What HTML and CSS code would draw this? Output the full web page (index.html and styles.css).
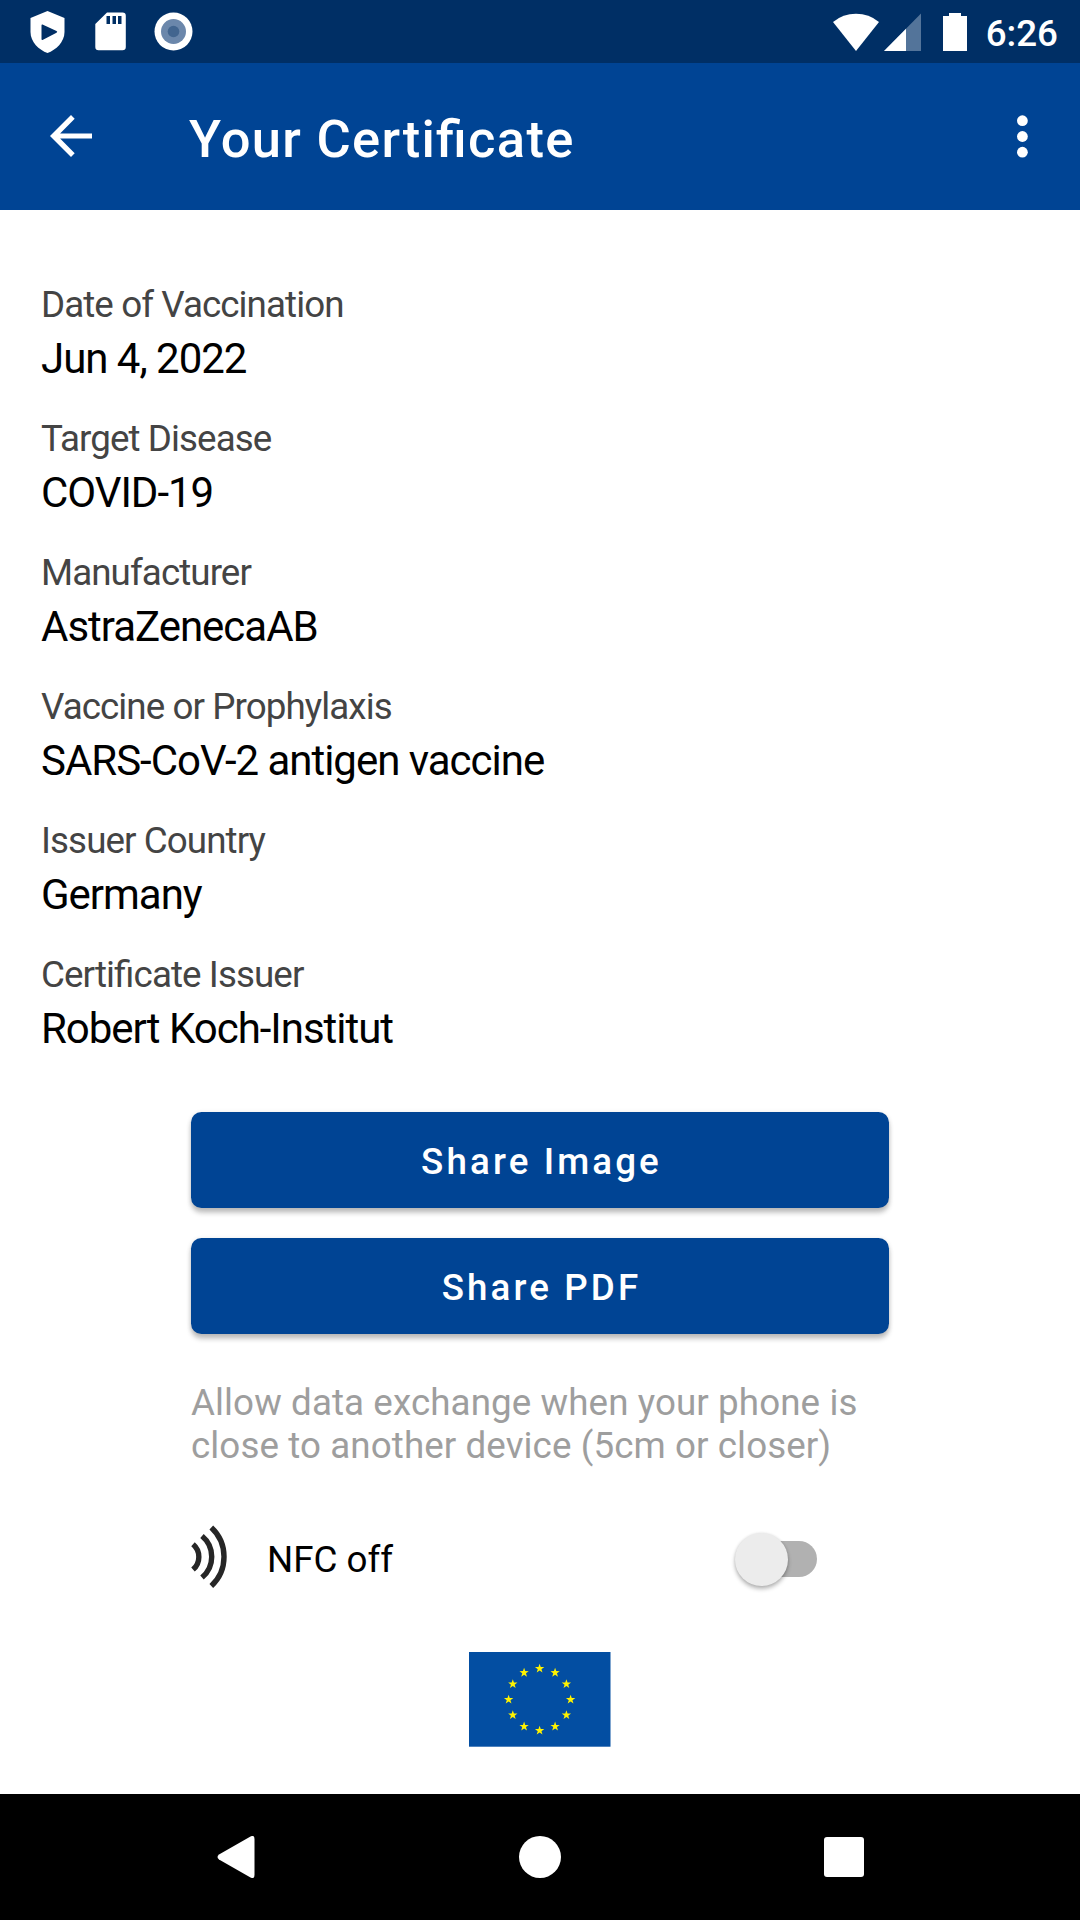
FILE: index.html
```html
<!DOCTYPE html>
<html lang="en">
<head>
<meta charset="utf-8">
<title>Your Certificate</title>
<link rel="stylesheet" href="styles.css">
</head>
<body>
<div class="status-bar">
  <div class="status-left">
    <svg width="36" height="42" viewBox="0 0 36 42"><path fill="#fff" fill-rule="evenodd" d="M17.500 0L34.500 7V21C34.500 31 26 39 17.500 42C9 39 0.500 31 0.500 21V7ZM12.500 13.500Q11.500 13 11.500 14.500V28Q11.500 29.500 13 28.700L26.500 21.800Q28 20.800 26.500 20Z"/></svg>
    <svg width="31" height="39" viewBox="0 0 31 39"><path fill="#fff" fill-rule="evenodd" d="M12 0.500H27.500Q30.800 0.500 30.800 3.800V35Q30.800 38.300 27.500 38.300H3.600Q0.300 38.300 0.300 35V12ZM11.500 4V12H15V4ZM17.500 4V12H21V4ZM23 4V12H26.500V4Z"/></svg>
    <svg class="record" width="39" height="39" viewBox="0 0 39 39"><circle cx="19.500" cy="19.500" r="19" fill="#fff"/><circle cx="19.500" cy="19.500" r="12.500" fill="#6b87ab"/><circle cx="19.500" cy="19.500" r="5.800" fill="#42658f"/></svg>
  </div>
  <div class="status-right">
    <svg width="46" height="38" viewBox="0 0 46 38"><path fill="#fff" d="M0 9Q10 0.800 23 0.800T46 9L23 38Z"/></svg>
    <svg class="signal" width="37" height="38" viewBox="0 0 37 38"><path fill="#53749a" d="M37 0.500V38H0Z"/><path fill="#fff" d="M22 15.700V38H0Z"/></svg>
    <svg class="battery" width="24" height="38" viewBox="0 0 24 38"><path fill="#fff" d="M6 0H18V3H24V38H0V3H6Z"/></svg>
    <span class="time">6:26</span>
  </div>
</div>
<header class="app-bar">
  <svg class="back" width="42" height="42" viewBox="0 0 42 42"><path fill="#fff" d="M42 18.400H10.100L24.700 3.700L21 0L0 21L21 42L24.700 38.300L10.100 23.600H42Z"/></svg>
  <h1 class="title">Your Certificate</h1>
  <svg class="more" width="12" height="43" viewBox="0 0 12 43"><g fill="#fff"><circle cx="6.400" cy="5.700" r="5.400"/><circle cx="6.400" cy="21.500" r="5.400"/><circle cx="6.400" cy="37.200" r="5.400"/></g></svg>
</header>
<main class="content">
  <dl class="fields">
    <div><dt>Date of Vaccination</dt><dd>Jun 4, 2022</dd></div>
    <div><dt>Target Disease</dt><dd>COVID-19</dd></div>
    <div><dt>Manufacturer</dt><dd>AstraZenecaAB</dd></div>
    <div><dt>Vaccine or Prophylaxis</dt><dd>SARS-CoV-2 antigen vaccine</dd></div>
    <div><dt>Issuer Country</dt><dd>Germany</dd></div>
    <div><dt>Certificate Issuer</dt><dd>Robert Koch-Institut</dd></div>
  </dl>
  <div class="actions">
    <button class="share">Share Image</button>
    <button class="share">Share PDF</button>
    <p class="hint">Allow data exchange when your phone is<br>close to another device (5cm or closer)</p>
    <div class="nfc">
      <svg width="36" height="68" viewBox="0 0 36 68"><g fill="none" stroke="#262626" stroke-width="5.400"><path d="M2 21.300A16.500 16.500 0 0 1 2 46.500"/><path d="M11 13A27 27 0 0 1 11 54.500"/><path d="M20.300 4.500A40 40 0 0 1 20.300 63"/></g></svg>
      <span class="nfc-label">NFC off</span>
      <span class="switch"><span class="thumb"></span></span>
    </div>
  </div>
  <svg class="flag" width="142" height="95" viewBox="0 0 142 95">
    <defs><path id="star" fill="#fff200" d="M0 -4.900L1.150 -1.590L4.660 -1.510L1.860 .61L2.880 3.960L0 1.960L-2.880 3.960L-1.860 .61L-4.660 -1.510L-1.150 -1.590Z"/></defs>
    <rect width="141.500" height="94.700" fill="#034ea2"/>
    <use href="#star" x="70.600" y="16.600"/><use href="#star" x="86.100" y="20.700"/><use href="#star" x="97.400" y="32.100"/><use href="#star" x="101.600" y="47.600"/><use href="#star" x="97.400" y="63.100"/><use href="#star" x="86.100" y="74.500"/><use href="#star" x="70.600" y="78.600"/><use href="#star" x="55.100" y="74.500"/><use href="#star" x="43.800" y="63.100"/><use href="#star" x="39.600" y="47.600"/><use href="#star" x="43.800" y="32.100"/><use href="#star" x="55.100" y="20.700"/>
  </svg>
</main>
<nav class="nav-bar">
  <svg width="38" height="42" viewBox="0 0 38 42"><path fill="#fff" d="M33.500 0.500Q37.500 -1.500 37.500 3V39Q37.500 43.500 33.500 41.500L2 23.500Q-1 21 2 18.500Z"/></svg>
  <svg width="42" height="42" viewBox="0 0 42 42"><circle cx="21" cy="21" r="21" fill="#fff"/></svg>
  <svg width="40" height="40" viewBox="0 0 40 40"><rect width="40" height="40" rx="3" fill="#fff"/></svg>
</nav>
</body>
</html>
```
FILE: styles.css
```css
* { box-sizing: border-box; }
body {
  margin: 0;
  width: 1080px;
  height: 1920px;
  display: flex;
  flex-direction: column;
  background: #fff;
  font-family: Roboto, sans-serif;
  font-feature-settings: "liga" 1;
  overflow: hidden;
}
svg { display: block; flex: none; }
.status-bar {
  height: 63px;
  background: #002f65;
  display: flex;
  justify-content: space-between;
  padding: 0 22px 0 30px;
}
.status-left, .status-right { display: flex; align-items: center; }
.status-left { gap: 29px; }
.record { margin-left: -1px; }
.signal { margin-left: 5px; }
.battery { margin-left: 22px; }
.time {
  margin-left: 19px;
  color: #fff;
  font-size: 36.75px;
  font-weight: 500;
  line-height: 63px;
  padding-top: 3px;
}
.app-bar {
  height: 147px;
  background: #004494;
  display: flex;
  align-items: center;
  padding: 0 52px 0 50px;
}
.back { margin-top: -1px; }
.title {
  margin: 4px 0 0 97px;
  color: #fff;
  font-size: 52.5px;
  font-weight: 500;
  line-height: 62px;
  letter-spacing: 1.3px;
}
.more { margin-left: auto; }
.content {
  flex: 1;
  display: flex;
  flex-direction: column;
  align-items: center;
  padding-top: 70px;
}
.fields {
  align-self: stretch;
  margin: 0;
  padding-left: 41px;
  display: flex;
  flex-direction: column;
  gap: 26px;
}
.fields dt {
  color: #444;
  font-size: 36.75px;
  line-height: 50px;
  letter-spacing: -0.92px;
}
.fields dd {
  margin: 1px 0 1px;
  color: #000;
  font-size: 42px;
  line-height: 56px;
  letter-spacing: -1.02px;
}
.actions {
  width: 698px;
  margin-top: 54px;
  display: flex;
  flex-direction: column;
}
.share {
  height: 96px;
  margin-bottom: 30px;
  padding: 2px 0 0;
  border: 0;
  border-radius: 10.5px;
  background: #004494;
  box-shadow: 0 5px 5px rgba(0, 0, 0, .22), 0 1px 5px rgba(0, 0, 0, .12);
  color: #fff;
  font: 500 36.75px/43px Roboto, sans-serif;
  letter-spacing: 3.1px;
  text-indent: 3px;
}
.hint {
  margin: 17px 0 0;
  color: #9e9e9e;
  font-size: 36.75px;
  line-height: 43px;
  letter-spacing: 0.09px;
}
.nfc {
  height: 68px;
  margin-top: 56px;
  display: flex;
  align-items: center;
}
.nfc-label {
  margin: 6px auto 0 40px;
  color: #000;
  font-size: 36.75px;
  line-height: 44px;
}
.switch {
  width: 77px;
  height: 36px;
  margin: 4px 72px 0 0;
  border-radius: 18px;
  background: #b1b1b1;
  display: flex;
  align-items: center;
}
.thumb {
  flex: none;
  width: 53px;
  height: 53px;
  margin-left: -5.5px;
  border-radius: 50%;
  background: #ececec;
  box-shadow: 0 3px 4px rgba(0, 0, 0, .28), 0 0 3px rgba(0, 0, 0, .1);
}
.flag { margin-top: 61px; }
.nav-bar {
  height: 126px;
  background: #000;
  display: flex;
  align-items: center;
  justify-content: space-between;
  padding: 0 216px 0 217px;
}
```
